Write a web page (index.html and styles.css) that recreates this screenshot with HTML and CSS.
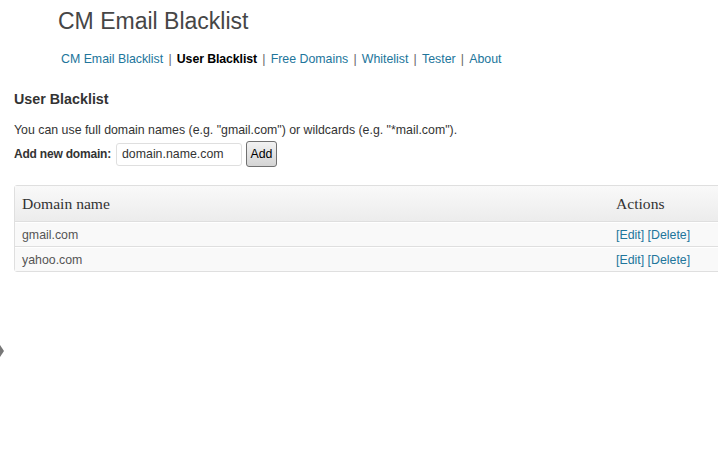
FILE: index.html
```html
<!DOCTYPE html>
<html>
<head>
<meta charset="utf-8">
<link rel="stylesheet" href="styles.css">
</head>
<body>
<div class="page">
  <h1 class="title">CM Email Blacklist</h1>
  <nav class="nav">
    <a href="#">CM Email Blacklist</a><span class="sep">|</span><b class="current">User Blacklist</b><span class="sep">|</span><a href="#">Free Domains</a><span class="sep">|</span><a href="#">Whitelist</a><span class="sep">|</span><a href="#">Tester</a><span class="sep">|</span><a href="#">About</a>
  </nav>
  <div class="content">
    <h3 class="heading">User Blacklist</h3>
    <p class="hint">You can use full domain names (e.g. "gmail.com") or wildcards (e.g. "*mail.com").</p>
    <form class="addform">
      <label class="lbl">Add new domain:</label>
      <input class="field" type="text" value="domain.name.com">
      <button class="btn" type="button">Add</button>
    </form>
    <table class="list">
      <thead>
        <tr><th class="c1">Domain name</th><th class="c2">Actions</th></tr>
      </thead>
      <tbody>
        <tr><td>gmail.com</td><td><a href="#">[Edit]</a> <a href="#">[Delete]</a></td></tr>
        <tr><td>yahoo.com</td><td><a href="#">[Edit]</a> <a href="#">[Delete]</a></td></tr>
      </tbody>
    </table>
  </div>
</div>
<div class="arrow"></div>
</body>
</html>
```
FILE: styles.css
```css
html, body {
  margin: 0;
  padding: 0;
  background: #fff;
  overflow: hidden;
  width: 718px;
  height: 458px;
}
body {
  font-family: "Liberation Sans", Arial, sans-serif;
  font-size: 12.35px;
  color: #333;
  position: relative;
}
.title {
  margin: 0;
  padding: 7px 0 0 58px;
  font-size: 23px;
  font-weight: normal;
  line-height: 29px;
  color: #464646;
}
.nav {
  padding: 15px 0 0 61px;
  font-size: 12.35px;
  line-height: 16px;
  color: #333;
}
.nav a {
  color: #21759b;
  text-decoration: none;
}
.nav .current {
  color: #000;
  letter-spacing: -0.1px;
}
.nav .sep {
  margin: 0 5.2px;
  color: #666;
}
.content {
  padding: 23px 0 0 14px;
}
.heading {
  margin: 0;
  font-size: 14.3px;
  line-height: 18px;
  font-weight: bold;
  color: #333;
}
.hint {
  margin: 14px 0 0 0;
  line-height: 16px;
}
.addform {
  margin-top: 3px;
  display: flex;
  align-items: center;
}
.lbl {
  font-weight: bold;
  font-size: 12px;
  letter-spacing: -0.2px;
  margin-right: 5px;
}
.field {
  width: 126px;
  height: 23px;
  box-sizing: border-box;
  border: 1px solid #dfdfdf;
  border-radius: 3px;
  padding: 0 5px;
  font-family: "Liberation Sans", Arial, sans-serif;
  font-size: 12.35px;
  color: #333;
  margin: 0;
}
.btn {
  margin-left: 4px;
  width: 31px;
  height: 26px;
  box-sizing: border-box;
  border: 1px solid #707070;
  border-radius: 3px;
  background: linear-gradient(#f2f2f2, #d4d4d4);
  font-family: "Liberation Sans", Arial, sans-serif;
  font-size: 12.35px;
  color: #000;
  padding: 0;
}
.list {
  margin-top: 18px;
  border-collapse: separate;
  border-spacing: 0;
  border: 1px solid #dfdfdf;
  border-radius: 3px;
  width: 780px;
  table-layout: fixed;
}
.list th {
  font-family: "Liberation Serif", Georgia, serif;
  font-size: 15.6px;
  font-weight: normal;
  color: #333;
  text-align: left;
  padding: 0 7px;
  height: 35px;
  background: linear-gradient(#f9f9f9, #ececec);
  border-bottom: 1px solid #dfdfdf;
}
.list th.c1 {
  width: 580px;
}
.list td {
  font-size: 12.35px;
  color: #555;
  padding: 0 7px;
  height: 23px;
  background: #f9f9f9;
  border-top: 1px solid #fff;
  border-bottom: 1px solid #dfdfdf;
}
.list tbody tr:last-child td {
  border-bottom: none;
}
.list td a {
  color: #21759b;
  text-decoration: none;
}
.arrow {
  position: absolute;
  left: 0;
  top: 345px;
  width: 0;
  height: 0;
  border-top: 6px solid transparent;
  border-bottom: 6px solid transparent;
  border-left: 4px solid #777;
}
```
